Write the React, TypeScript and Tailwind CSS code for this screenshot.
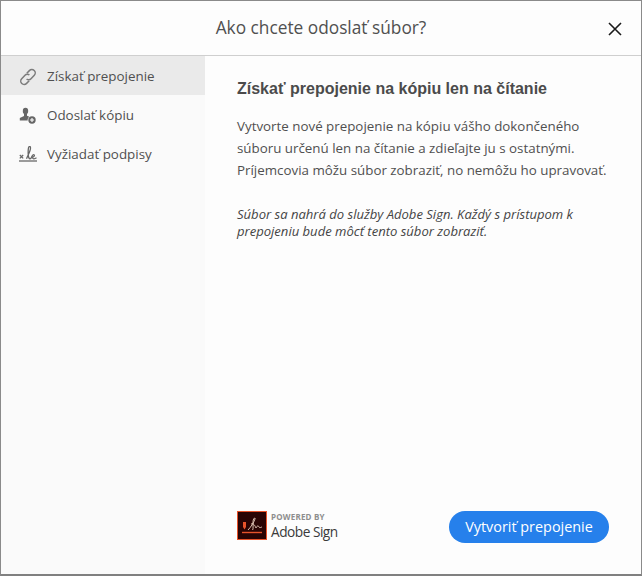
import { ReactNode } from 'react'

function LinkIcon() {
  return (
    <svg width="18" height="18" viewBox="0 0 18 18" fill="none" stroke="#7c7c7c" strokeWidth="1.5">
      <path d="M7.8 5.2 L10.4 2.6 a3.1 3.1 0 0 1 4.9 4.7 L12 10.8 a3.1 3.1 0 0 1 -4.4 0.2" />
      <path d="M10.2 12.8 L7.6 15.4 a3.1 3.1 0 0 1 -4.9 -4.7 L6 7.2 a3.1 3.1 0 0 1 4.4 -0.2" />
    </svg>
  )
}

function PersonAddIcon() {
  return (
    <svg width="18" height="18" viewBox="0 0 18 18">
      <ellipse cx="6.5" cy="4" rx="2.7" ry="3.3" fill="#666" />
      <path d="M5 6.5 h3 v2.2 l3 1.4 v3.4 H0.8 v-2.6 l4.2 -2 z" fill="#666" />
      <circle cx="13" cy="13" r="4.4" fill="#fafafa" />
      <circle cx="13" cy="13" r="3.7" fill="#666" />
      <path d="M13 11 v4 M11 13 h4" stroke="#fff" strokeWidth="1.1" />
    </svg>
  )
}

function SignIcon() {
  return (
    <svg width="18" height="18" viewBox="0 0 18 18" fill="none" stroke="#666">
      <path d="M0.8 9 l3.4 3.4 M4.2 9 l-3.4 3.4" strokeWidth="1.2" />
      <path d="M7.5 12.8 C9 9 11.5 5 11.5 2 C11.5 -0.5 9.5 0 9.3 3 C9 7 9 12.8 11 12.8 C13 12.8 12.5 8.6 14.5 8.6 C16 8.6 15.5 11.2 13.5 11.2 C13.5 13.2 15.5 13.2 17.5 11.8" strokeWidth="1.3" />
      <path d="M0 15 H18" strokeWidth="1.7" stroke="#8a8a8a" />
    </svg>
  )
}

function NavItem({ icon, label, active }: { icon: ReactNode; label: string; active?: boolean }) {
  return (
    <div className={`flex h-[39px] items-center pt-[2px] pl-[18px] ${active ? 'bg-[#eaeaea]' : ''}`}>
      <span className="flex w-[28px]">{icon}</span>
      <span className="text-[13.4px] text-[#505050]">{label}</span>
    </div>
  )
}

function AdobeSignLogo() {
  return (
    <div className="flex items-start gap-[4px]">
      <svg width="30" height="29" viewBox="0 0 30 29">
        <rect x="0.5" y="0.5" width="29" height="28" fill="#2a0404" stroke="#e8532b" />
        <path d="M6 11 h3 v5 l-1.5 2.4 l-1.5 -2.4 z" fill="#e8532b" />
        <path d="M11 19 C14 16 17 11 18 8 C18.6 6 16 7 16 11 C16 14 16.4 18 15.6 19 M14 13 C17 12 18 15 19 17 C20 15 21 14 22 16 C23 17.4 24 16 25 16" fill="none" stroke="#ecd2c2" strokeWidth="0.9" />
        <path d="M5 21.5 H25" stroke="#e8532b" strokeWidth="1.4" />
      </svg>
      <div className="flex flex-col">
        <span className="mt-[1px] text-[8px] leading-[10px] font-bold tracking-[0.2px] text-[#8e8e8e]">POWERED BY</span>
        <span className="text-[13.7px] leading-[19px] tracking-[-0.5px] text-[#3a3a3a]">Adobe Sign</span>
      </div>
    </div>
  )
}

export default function App() {
  return (
    <div className="flex h-[576px] w-[642px] flex-col border-x border-t border-b-2 border-x-[#8a8a8a] border-t-[#8a8a8a] border-b-[#808080] bg-[#fdfdfd] font-['Open_Sans',sans-serif]">
      <header className="flex h-[55px] shrink-0 items-center justify-between border-b border-[#cfcfcf] pr-[17px] pl-[17px]">
        <div className="w-[18px]" />
        <h1 className="text-[17.3px] text-[#505050]">Ako chcete odoslať súbor?</h1>
        <svg className="mt-[2px]" width="18" height="18" viewBox="0 0 18 18" stroke="#1a1a1a" strokeWidth="1.6" fill="none">
          <path d="M3 3 L15 15 M15 3 L3 15" />
        </svg>
      </header>
      <div className="flex min-h-0 flex-1">
        <aside className="w-[204px] shrink-0 bg-[#fafafa]">
          <NavItem icon={<LinkIcon />} label="Získať prepojenie" active />
          <NavItem icon={<PersonAddIcon />} label="Odoslať kópiu" />
          <NavItem icon={<SignIcon />} label="Vyžiadať podpisy" />
        </aside>
        <main className="flex flex-1 flex-col pr-[32px] pl-[32px]">
          <h2 className="mt-[23px] font-['Liberation_Sans',sans-serif] text-[16px] leading-[20px] font-bold text-[#4b4b4b]">
            Získať prepojenie na kópiu len na čítanie
          </h2>
          <p className="mt-[16px] text-[13.35px] leading-[22px] text-[#505050]">
            Vytvorte nové prepojenie na kópiu vášho dokončeného
            <br />
            súboru určenú len na čítanie a zdieľajte ju s ostatnými.
            <br />
            Príjemcovia môžu súbor zobraziť, no nemôžu ho upravovať.
          </p>
          <p className="mt-[25px] text-[13.05px] leading-[17px] text-[#444] italic">
            Súbor sa nahrá do služby Adobe Sign. Každý s prístupom k
            <br />
            prepojeniu bude môcť tento súbor zobraziť.
          </p>
          <div className="mt-auto mb-[31px] flex items-start justify-between">
            <AdobeSignLogo />
            <button className="h-[32px] w-[160px] rounded-full bg-[#2680eb] text-[14.4px] text-white">
              Vytvoriť prepojenie
            </button>
          </div>
        </main>
      </div>
    </div>
  )
}
